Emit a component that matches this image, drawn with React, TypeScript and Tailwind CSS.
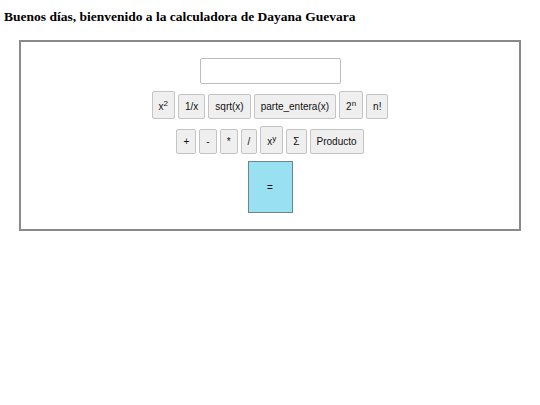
import type { ReactNode } from 'react';

const btn =
  'px-[6px] py-[6px] border border-[#c4c4c4] rounded-[2px] bg-[#efefef] text-[10px] leading-[11px] text-[#111] font-["Liberation_Sans",Arial,sans-serif]';

function Key({ children, tall }: { children: ReactNode; tall?: boolean }) {
  return <button className={`${btn} ${tall ? 'pt-[9px]' : ''}`}>{children}</button>;
}

function Sup({ children }: { children: ReactNode }) {
  return <sup className="relative -top-[4px] text-[8px] leading-none align-baseline">{children}</sup>;
}

export default function App() {
  return (
    <div className="min-h-screen bg-white pt-[9px]">
      {/* Header */}
      <h3 className="ml-[4px] text-[13.5px] leading-[16px] font-bold text-black font-['Liberation_Serif','Times_New_Roman',serif]">
        Buenos días, bienvenido a la calculadora de Dayana Guevara
      </h3>

      <div className="mx-[19px] mt-[15px] border-2 border-[#8a8a8a] pt-[16px] pb-[16px] flex flex-col items-center">
        <input
          type="text"
          className="w-[141px] h-[26px] border border-[#bcbcbc] rounded-[2px] bg-white outline-none"
        />

        <div className="mt-[7px] flex items-end gap-[3px]">
          <Key tall>
            x<Sup>2</Sup>
          </Key>
          <Key>1/x</Key>
          <Key>sqrt(x)</Key>
          <Key>parte_entera(x)</Key>
          <Key tall>
            2<Sup>n</Sup>
          </Key>
          <Key>n!</Key>
        </div>

        <div className="mt-[7px] flex items-end gap-[3px]">
          <Key>+</Key>
          <Key>-</Key>
          <Key>*</Key>
          <Key>/</Key>
          <Key tall>
            x<Sup>y</Sup>
          </Key>
          <Key>Σ</Key>
          <Key>Producto</Key>
        </div>

        <button className="mt-[7px] w-[45px] h-[52px] border border-[#6b8591] bg-[#99e0f2] text-[10px] text-[#111] font-['Liberation_Sans',Arial,sans-serif]">
          =
        </button>
      </div>
    </div>
  );
}
